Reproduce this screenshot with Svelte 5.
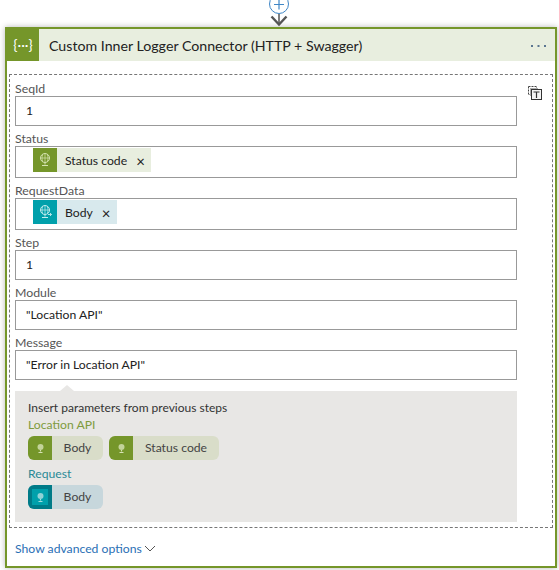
<script>
  const fields = [
    { label: 'SeqId', value: '1' },
    { label: 'Status', token: { text: 'Status code', kind: 'green' } },
    { label: 'RequestData', token: { text: 'Body', kind: 'teal' } },
    { label: 'Step', value: '1' },
    { label: 'Module', value: '"Location API"' },
    { label: 'Message', value: '"Error in Location API"' }
  ];
</script>

{#snippet bulb(color, arrow)}
  <svg width="14" height="16" viewBox="0 0 14 16" fill="none" stroke={color} stroke-width="1">
    <circle cx="7" cy="6" r="4.500" />
    <path d="M2.800 6h8.400M7 1.500v9M4.800 2.500c-1 2-1 5 0 7M9.200 2.500c1 2 1 5 0 7" stroke-width="0.700" />
    <path d="M7 10.500v2M4 13.500h6" />
    {#if arrow}
      <path d="M10 10.500h3.500M12 9l1.500 1.500-1.500 1.500" stroke-width="0.900" />
    {/if}
  </svg>
{/snippet}

{#snippet pill(text, width, kind)}
  <div class="pill {kind}" style="width: {width}px">
    <span class="pill-icon">
      <span class="pill-inner">
        <svg width="9" height="11" viewBox="0 0 9 11" fill="none">
          <circle cx="4.500" cy="4" r="3" fill={kind === 'green' ? '#c3d39a' : '#8fd2d6'} />
          <path d="M4.500 7v1.500M2.500 9.500h4" stroke={kind === 'green' ? '#d6e2b4' : '#a5dde0'} stroke-width="1.200" />
        </svg>
      </span>
    </span>
    <span class="pill-text">{text}</span>
  </div>
{/snippet}

<div class="page">
  <svg class="connector" width="559" height="27" viewBox="0 0 559 27" fill="none">
    <circle cx="279" cy="4" r="9.500" fill="#fff" stroke="#3f86c6" stroke-width="1" />
    <path d="M274 4.500h10M279 -0.500v10" stroke="#3f86c6" stroke-width="1.200" />
    <path d="M279 14v10" stroke="#555" stroke-width="1.500" />
    <path d="M271.500 16.500l7.500 8 7.500-8" stroke="#555" stroke-width="2.400" />
  </svg>

  <div class="card">
    <header class="head">
      <span class="head-icon">{'{···}'}</span>
      <span class="head-title">Custom Inner Logger Connector (HTTP + Swagger)</span>
      <svg class="dots" width="15" height="2" viewBox="0 0 15 2">
        <rect x="0" width="2" height="2" />
        <rect x="6.500" width="2" height="2" />
        <rect x="13" width="2" height="2" />
      </svg>
    </header>

    <div class="dashed">
      <div class="form">
        {#each fields as f}
          <div class="field">
            <div class="label">{f.label}</div>
            <div class="input" class:has-token={f.token}>
              {#if f.token}
                <span class="token {f.token.kind}">
                  <span class="token-icon">
                    {@render bulb(f.token.kind === 'green' ? '#d5e3b0' : '#c4ecee', f.token.kind === 'teal')}
                  </span>
                  <span class="token-text">{f.token.text}</span>
                  <span class="token-x">×</span>
                </span>
              {:else}
                {f.value}
              {/if}
            </div>
          </div>
        {/each}

        <div class="panel">
          <span class="caret"></span>
          <div class="panel-title">Insert parameters from previous steps</div>
          <div class="group-name olive">Location API</div>
          <div class="pills">
            {@render pill('Body', 75, 'green')}
            {@render pill('Status code', 110, 'green')}
          </div>
          <div class="group-name sea">Request</div>
          <div class="pills">
            {@render pill('Body', 75, 'teal')}
          </div>
        </div>
      </div>

      <svg class="clip" width="14" height="14" viewBox="0 0 14 14" fill="none">
        <rect x="0.500" y="0.500" width="8" height="8" stroke="#444" stroke-width="1" stroke-dasharray="2 1" />
        <rect x="2" y="2" width="8" height="8" fill="#aaa" />
        <rect x="3.500" y="3.500" width="10" height="10" fill="#f4f4f4" stroke="#333" stroke-width="1" />
        <path d="M5.500 6h6M8.500 6v6" stroke="#333" stroke-width="1.200" />
      </svg>
    </div>

    <div class="advanced">
      <span>Show advanced options</span>
      <svg width="12" height="7" viewBox="0 0 12 7" fill="none">
        <path d="M1 1l5 5 5-5" stroke="#555" stroke-width="1" />
      </svg>
    </div>
  </div>
</div>

<style>
  :global(body) {
    background: #fff;
    font-family: Lato, "Open Sans", sans-serif;
    overflow: hidden;
  }

  .page {
    width: 559px;
    height: 570px;
    overflow: hidden;
  }

  .connector {
    display: block;
  }

  .card {
    box-sizing: border-box;
    width: 552px;
    height: 541px;
    margin-left: 5px;
    border: 2px solid #75962a;
    background: #fff;
    box-shadow: 0 0 6px rgba(0, 0, 0, 0.28);
    display: flex;
    flex-direction: column;
  }

  .head {
    height: 32px;
    background: #e8eedf;
    display: flex;
    align-items: center;
    flex-shrink: 0;
  }

  .head-icon {
    width: 32px;
    height: 32px;
    background: #75962a;
    color: #fff;
    font-size: 14px;
    font-weight: 400;
    line-height: 31px;
    text-align: center;
    flex-shrink: 0;
  }

  .head-title {
    margin-left: 10px;
    font-size: 14.200px;
    color: #222;
    white-space: nowrap;
  }

  .dots {
    margin-left: auto;
    margin-right: 9px;
    margin-top: 1px;
    fill: #5a7590;
  }

  .dashed {
    position: relative;
    box-sizing: border-box;
    height: 454px;
    margin: 13px 2px 0 2px;
    border: 1px dashed #777;
    padding: 5px 5px 0 5px;
  }

  .form {
    width: 502px;
  }

  .field {
    display: flex;
    flex-direction: column;
    margin-bottom: 4px;
  }

  .label {
    height: 16px;
    font-size: 12.300px;
    line-height: 18px;
    color: #555;
  }

  .input {
    box-sizing: border-box;
    height: 30px;
    border: 1px solid #999;
    padding-left: 10px;
    font-size: 12.200px;
    line-height: 28px;
    color: #222;
  }

  .input.has-token {
    height: 32px;
    padding: 1px 0 0 17px;
  }

  .token {
    display: inline-flex;
    height: 24px;
    align-items: center;
    font-size: 12.200px;
    color: #222;
  }

  .token.green {
    background: #e8eedf;
  }

  .token.teal {
    background: #d8e9ed;
  }

  .token-icon {
    width: 24px;
    height: 24px;
    display: flex;
    align-items: center;
    justify-content: center;
  }

  .green .token-icon {
    background: #75962a;
  }

  .teal .token-icon {
    background: #00a0ab;
  }

  .token-text {
    margin-left: 8px;
    padding-top: 2px;
    line-height: 22px;
  }

  .token-x {
    margin: 2px 6px 0 9px;
    font-size: 15px;
    line-height: 1;
  }

  .panel {
    position: relative;
    box-sizing: border-box;
    height: 131px;
    margin-top: 11px;
    padding: 9px 13px 0 13px;
    background: #e8e7e5;
  }

  .caret {
    position: absolute;
    top: -6px;
    left: 45px;
    border-left: 7px solid transparent;
    border-right: 7px solid transparent;
    border-bottom: 6px solid #e8e7e5;
  }

  .panel-title {
    font-size: 12px;
    line-height: 15px;
    color: #333;
  }

  .group-name {
    font-size: 12.200px;
    line-height: 16px;
    margin-top: 2px;
  }

  .group-name.olive {
    color: #7f9b3d;
  }

  .group-name.sea {
    color: #2b8a96;
    margin-top: 6px;
  }

  .pills {
    display: flex;
    gap: 6px;
    margin-top: 3px;
  }

  .pill {
    height: 24px;
    display: flex;
    border-radius: 6px;
    overflow: hidden;
    font-size: 12.200px;
    color: #444;
  }

  .pill.green {
    background: #d9ddc9;
  }

  .pill.teal {
    background: #c7d7dc;
  }

  .pill-icon {
    width: 24px;
    display: flex;
    align-items: center;
    justify-content: center;
    flex-shrink: 0;
  }

  .pill.green .pill-icon {
    background: #75962a;
  }

  .pill.teal .pill-icon {
    background: #007b88;
  }

  .pill-inner {
    width: 16px;
    height: 16px;
    display: flex;
    align-items: center;
    justify-content: center;
  }

  .pill.teal .pill-inner {
    background: #00a0ab;
  }

  .pill-text {
    flex: 1;
    text-align: center;
    line-height: 23px;
  }

  .clip {
    position: absolute;
    top: 11px;
    right: 10px;
  }

  .advanced {
    display: flex;
    align-items: center;
    gap: 2px;
    margin: 13px 0 0 8px;
    font-size: 12.200px;
    color: #2a6fb5;
  }
</style>
